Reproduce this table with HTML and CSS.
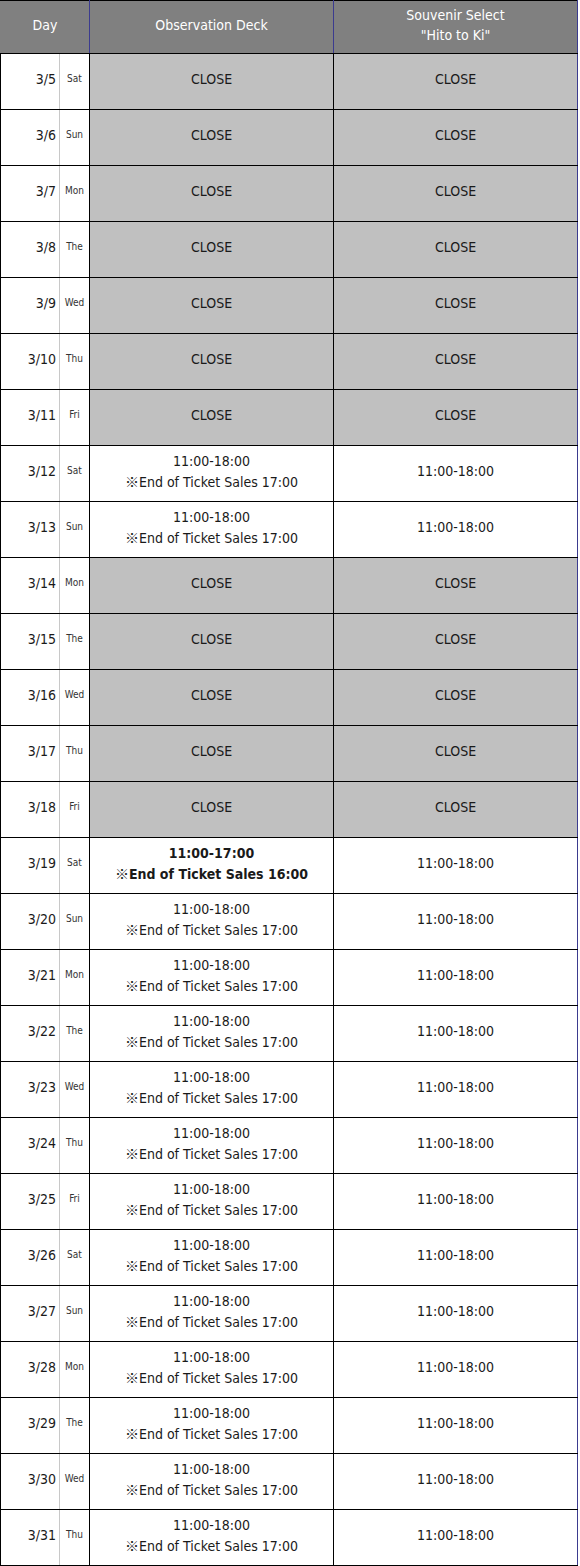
FILE: index.html
```html
<!DOCTYPE html>
<html lang="en">
<head>
<meta charset="utf-8">
<title>Business hours</title>
<link rel="stylesheet" href="styles.css">
</head>
<body>
<table class="hours">
  <colgroup>
    <col class="c-date">
    <col class="c-wd">
    <col class="c-deck">
    <col class="c-shop">
  </colgroup>
  <thead>
    <tr>
      <th colspan="2">Day</th>
      <th>Observation Deck</th>
      <th>Souvenir Select<br>"Hito to Ki"</th>
    </tr>
  </thead>
  <tbody>
    <tr class="closed"><td class="date">3/5</td><td class="wd">Sat</td><td>CLOSE</td><td>CLOSE</td></tr>
    <tr class="closed"><td class="date">3/6</td><td class="wd">Sun</td><td>CLOSE</td><td>CLOSE</td></tr>
    <tr class="closed"><td class="date">3/7</td><td class="wd">Mon</td><td>CLOSE</td><td>CLOSE</td></tr>
    <tr class="closed"><td class="date">3/8</td><td class="wd">The</td><td>CLOSE</td><td>CLOSE</td></tr>
    <tr class="closed"><td class="date">3/9</td><td class="wd">Wed</td><td>CLOSE</td><td>CLOSE</td></tr>
    <tr class="closed"><td class="date">3/10</td><td class="wd">Thu</td><td>CLOSE</td><td>CLOSE</td></tr>
    <tr class="closed"><td class="date">3/11</td><td class="wd">Fri</td><td>CLOSE</td><td>CLOSE</td></tr>
    <tr><td class="date">3/12</td><td class="wd">Sat</td><td>11:00-18:00<br><span class="kome">※</span>End of Ticket Sales 17:00</td><td>11:00-18:00</td></tr>
    <tr><td class="date">3/13</td><td class="wd">Sun</td><td>11:00-18:00<br><span class="kome">※</span>End of Ticket Sales 17:00</td><td>11:00-18:00</td></tr>
    <tr class="closed"><td class="date">3/14</td><td class="wd">Mon</td><td>CLOSE</td><td>CLOSE</td></tr>
    <tr class="closed"><td class="date">3/15</td><td class="wd">The</td><td>CLOSE</td><td>CLOSE</td></tr>
    <tr class="closed"><td class="date">3/16</td><td class="wd">Wed</td><td>CLOSE</td><td>CLOSE</td></tr>
    <tr class="closed"><td class="date">3/17</td><td class="wd">Thu</td><td>CLOSE</td><td>CLOSE</td></tr>
    <tr class="closed"><td class="date">3/18</td><td class="wd">Fri</td><td>CLOSE</td><td>CLOSE</td></tr>
    <tr><td class="date">3/19</td><td class="wd">Sat</td><td class="special">11:00-17:00<br><span class="kome">※</span>End of Ticket Sales 16:00</td><td>11:00-18:00</td></tr>
    <tr><td class="date">3/20</td><td class="wd">Sun</td><td>11:00-18:00<br><span class="kome">※</span>End of Ticket Sales 17:00</td><td>11:00-18:00</td></tr>
    <tr><td class="date">3/21</td><td class="wd">Mon</td><td>11:00-18:00<br><span class="kome">※</span>End of Ticket Sales 17:00</td><td>11:00-18:00</td></tr>
    <tr><td class="date">3/22</td><td class="wd">The</td><td>11:00-18:00<br><span class="kome">※</span>End of Ticket Sales 17:00</td><td>11:00-18:00</td></tr>
    <tr><td class="date">3/23</td><td class="wd">Wed</td><td>11:00-18:00<br><span class="kome">※</span>End of Ticket Sales 17:00</td><td>11:00-18:00</td></tr>
    <tr><td class="date">3/24</td><td class="wd">Thu</td><td>11:00-18:00<br><span class="kome">※</span>End of Ticket Sales 17:00</td><td>11:00-18:00</td></tr>
    <tr><td class="date">3/25</td><td class="wd">Fri</td><td>11:00-18:00<br><span class="kome">※</span>End of Ticket Sales 17:00</td><td>11:00-18:00</td></tr>
    <tr><td class="date">3/26</td><td class="wd">Sat</td><td>11:00-18:00<br><span class="kome">※</span>End of Ticket Sales 17:00</td><td>11:00-18:00</td></tr>
    <tr><td class="date">3/27</td><td class="wd">Sun</td><td>11:00-18:00<br><span class="kome">※</span>End of Ticket Sales 17:00</td><td>11:00-18:00</td></tr>
    <tr><td class="date">3/28</td><td class="wd">Mon</td><td>11:00-18:00<br><span class="kome">※</span>End of Ticket Sales 17:00</td><td>11:00-18:00</td></tr>
    <tr><td class="date">3/29</td><td class="wd">The</td><td>11:00-18:00<br><span class="kome">※</span>End of Ticket Sales 17:00</td><td>11:00-18:00</td></tr>
    <tr><td class="date">3/30</td><td class="wd">Wed</td><td>11:00-18:00<br><span class="kome">※</span>End of Ticket Sales 17:00</td><td>11:00-18:00</td></tr>
    <tr><td class="date">3/31</td><td class="wd">Thu</td><td>11:00-18:00<br><span class="kome">※</span>End of Ticket Sales 17:00</td><td>11:00-18:00</td></tr>
  </tbody>
</table>
</body>
</html>
```

FILE: styles.css
```css
html, body {
  margin: 0;
  padding: 0;
  background: #ffffff;
}

.hours {
  width: 578px;
  table-layout: fixed;
  border-collapse: collapse;
  font-family: "DejaVu Sans Condensed", "DejaVu Sans", "Noto Sans CJK JP", sans-serif;
  font-stretch: condensed;
  font-size: 14px;
  line-height: 20px;
  color: #1a1a1a;
  border: 1px solid #000000;
  border-right-color: #3b3b8f;
}

.c-date { width: 59px; }
.c-wd { width: 30px; }
.c-deck { width: 244px; }
.c-shop { width: 244px; }

.hours th {
  height: 47px;
  padding: 0 0 5px 0;
  background: #808080;
  color: #ffffff;
  font-weight: normal;
  text-align: center;
  vertical-align: middle;
  border: 1px solid #000000;
  border-right-color: #3b3b8f;
}

.hours th:first-child {
  border-left-color: #808080;
}

.hours td {
  height: 50px;
  padding: 0 0 5px 0;
  text-align: center;
  vertical-align: middle;
  border: 1px solid #000000;
}

.hours td:last-child {
  border-right-color: #3b3b8f;
}

.hours td.date {
  text-align: right;
  padding-right: 3px;
  border-right: 1px solid #c8c8c8;
}

.hours td.wd {
  font-size: 10px;
  color: #333333;
  border-left: 1px solid #c8c8c8;
}

.hours tr.closed td:nth-child(n+3) {
  background: #c0c0c0;
}

.hours td.special {
  font-weight: bold;
}

.kome {
  font-family: "Noto Sans CJK JP", sans-serif;
  font-weight: 300;
  font-stretch: normal;
}

.hours td.special .kome {
  font-weight: bold;
}
```
